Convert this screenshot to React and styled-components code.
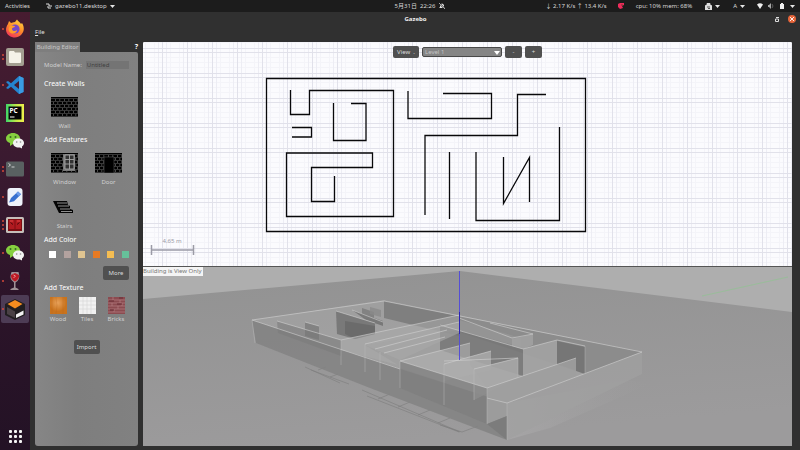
import React from "react";
import styled, { createGlobalStyle } from "styled-components";

const GlobalStyle = createGlobalStyle`
  * { box-sizing: border-box; }
  body {
    margin: 0;
    background: #303030;
    color: #d8d8d8;
    font: 6px/10px "Noto Sans", "Noto Sans CJK SC", sans-serif;
  }
  button, input, select { font: inherit; color: inherit; margin: 0; padding: 0; border: 0; }
  svg { display: block; }
`;

const Desktop = styled.div`
  height: 100vh;
  display: grid;
  grid-template-rows: 12px minmax(0, 1fr);
`;

const TopBar = styled.header`
  display: grid;
  grid-template-columns: 1fr auto 1fr;
  align-items: center;
  padding: 0 5px;
  background: #1c1c1c;
`;

const BarGroup = styled.div`
  display: flex;
  align-items: center;
  justify-content: ${(p) => (p.$end ? "flex-end" : "flex-start")};
  gap: ${(p) => p.$gap}px;
  white-space: nowrap;
`;

const Clock = styled(BarGroup)`
  padding-left: 40px;
`;

const BarButton = styled.button`
  display: flex;
  align-items: center;
  gap: 3px;
  background: none;
`;

const Workspace = styled.div`
  display: grid;
  grid-template-columns: 30px minmax(0, 1fr);
  min-height: 0;
`;

const Dock = styled.nav`
  display: flex;
  flex-direction: column;
  justify-content: space-between;
  padding: 3px 0 0;
  background: linear-gradient(#471c30 0, #3a1a30 35%, #2c1429 65%, #231225);
`;

const DockList = styled.div`
  display: flex;
  flex-direction: column;
`;

const DockButton = styled.button`
  position: relative;
  width: 28px;
  height: 28px;
  margin-left: 1px;
  display: grid;
  place-items: center;
  border-radius: 2px;
  background: ${(p) => (p.$active ? "#4d3c55" : "none")};
`;

const Dots = styled.span`
  position: absolute;
  left: 1px;
  top: 0;
  height: 100%;
  display: flex;
  flex-direction: column;
  justify-content: center;
  gap: 2px;
`;

const Dot = styled.i`
  width: 2px;
  height: 2px;
  border-radius: 1px;
  background: #d5483a;
`;

const AppWindow = styled.main`
  display: grid;
  grid-template-rows: 14px 16px minmax(0, 1fr);
  padding: 0 8px 4px 5px;
  background: #303030;
  min-width: 0;
`;

const TitleBar = styled.div`
  display: grid;
  grid-template-columns: 1fr auto 1fr;
  align-items: center;
  margin-right: -4px;
`;

const Title = styled.h1`
  margin: 0;
  font-size: 6px;
  line-height: 10px;
  color: #f0f0f0;
`;

const WindowButtons = styled.div`
  display: flex;
  justify-content: flex-end;
  align-items: center;
  gap: 7px;
`;

const WindowButton = styled.button`
  width: 8px;
  height: 8px;
  display: grid;
  place-items: center;
  border-radius: 4px;
  background: ${(p) => (p.$close ? "#e7653a" : "none")};
`;

const MenuBar = styled.div`
  display: flex;
  align-items: flex-start;
  padding-top: 1px;
`;

const MenuButton = styled.button`
  background: none;
  color: #e0e0e0;
`;

const Columns = styled.div`
  display: grid;
  grid-template-columns: 103px minmax(0, 1fr);
  gap: 5px;
  min-height: 0;
`;

const Sidebar = styled.aside`
  display: flex;
  flex-direction: column;
`;

const TabRow = styled.div`
  display: flex;
  justify-content: space-between;
  height: 10px;
`;

const Tab = styled.button`
  width: 45px;
  background: #7e7e7e;
  color: #c6c6c6;
`;

const HelpButton = styled.button`
  background: none;
  color: #fff;
  font-size: 7px;
  font-weight: 700;
`;

const Palette = styled.div`
  flex: 1;
  padding: 8px 9px;
  background: linear-gradient(90deg, #868686, #7e7e7e 40%, #818181);
  border-radius: 0 2px 3px 3px;
`;

const Field = styled.label`
  display: grid;
  grid-template-columns: auto minmax(0, 1fr);
  gap: 4px;
  height: 10px;
  color: #cfcfcf;
`;

const NameInput = styled.input`
  width: 100%;
  height: 8px;
  margin-top: 1px;
  padding-left: 1px;
  background: #747474;
  color: #404040;
`;

const Heading = styled.h2`
  margin: ${(p) => p.$top}px 0 0;
  font-size: 7px;
  line-height: 12px;
  font-weight: 400;
  color: #fff;
`;

const ToolGrid = styled.div`
  display: grid;
  grid-template-columns: 41px 41px;
  gap: 10px 3px;
  margin-top: 7px;
`;

const ToolButton = styled.button`
  display: grid;
  justify-items: center;
  gap: ${(p) => p.$gap}px;
  background: none;
  color: #d0d0d0;
`;

const Swatches = styled.div`
  display: flex;
  justify-content: space-between;
  margin: 5px 0 8px;
  padding: 0 0 0 5px;
`;

const Swatch = styled.button`
  width: 7px;
  height: 7px;
  background: ${(p) => p.$color};
`;

const ActionRow = styled.div`
  display: flex;
  justify-content: ${(p) => p.$align};
  margin-top: ${(p) => p.$top}px;
`;

const PushButton = styled.button`
  height: ${(p) => (p.$small ? 12 : 14)}px;
  width: ${(p) => p.$width}px;
  border-radius: 2px;
  background: #505050;
  color: #dcdcdc;
`;

const TextureRow = styled.div`
  display: grid;
  grid-template-columns: repeat(3, 28px);
  gap: 1px;
  margin-top: 3px;
`;

const Views = styled.section`
  display: grid;
  grid-template-rows: minmax(0, 56fr) minmax(0, 45fr);
  min-height: 0;
`;

const View = styled.div`
  position: relative;
  min-width: 0;
  overflow: hidden;
  background: ${(p) => p.$bg};
  border-top: ${(p) => (p.$divided ? "1px solid #555" : "0")};
  border-radius: ${(p) => (p.$divided ? "0" : "2px 2px 0 0")};
`;

const Scene = styled.svg`
  width: 100%;
  height: 100%;
`;

const ViewTools = styled.div`
  position: absolute;
  top: 4px;
  left: 0;
  right: 0;
  display: flex;
  justify-content: center;
  align-items: center;
  gap: 3px;
`;

const SelectWrap = styled.div`
  position: relative;
  width: 80px;
`;

const LevelSelect = styled.select`
  display: block;
  appearance: none;
  width: 100%;
  height: 10px;
  padding-left: 2px;
  border: 1px solid #484848;
  border-radius: 2px;
  line-height: 8px;
  background: #858585;
  color: #c4c4c4;
`;

const SelectArrow = styled.svg`
  position: absolute;
  right: 2px;
  top: 4px;
  pointer-events: none;
`;

const Notice = styled.div`
  position: absolute;
  top: 0;
  left: 0;
  padding-right: 1px;
  line-height: 9px;
  background: #f4f4f4;
  color: #777;
`;

const Caret = () => (
  <svg width="5" height="3" viewBox="0 0 5 3"><path d="M0 0h5L2.5 3z" fill="#e4e4e4" /></svg>
);

const Firefox = () => (
  <svg width="20" height="20" viewBox="0 0 20 20">
    <defs>
      <linearGradient id="fx" x1="0.8" y1="0" x2="0.3" y2="1">
        <stop offset="0" stopColor="#ffd83e" /><stop offset=".5" stopColor="#ff8a2a" /><stop offset="1" stopColor="#f2345a" />
      </linearGradient>
    </defs>
    <path d="M3 5l1-3 2 2c1 0 2-1 4-1l2-2.500c1 2 3 2.500 4 4.500l1-1c3 5 2 9-1 12-3 3-8 3.500-12 .5C.5 14 0 9 3 5z" fill="url(#fx)" />
    <circle cx="10" cy="10" r="4.600" fill="#7547c8" />
    <path d="M5 7c2-1 3 0 5 0 0 2-3 1-3 3s3 3 5 1c0 4-6 5-8 1-1-2 0-4 1-5z" fill="#ff9c2b" />
  </svg>
);

const Files = () => (
  <svg width="20" height="20" viewBox="0 0 20 20">
    <rect x="1" y="1" width="18" height="18" rx="2" fill="#a39e91" />
    <path d="M4 5q0-1 1-1h4l1 1.500h5q1 0 1 1V15q0 1-1 1H5q-1 0-1-1z" fill="#f5f2e9" />
  </svg>
);

const Code = () => (
  <svg width="20" height="20" viewBox="0 0 20 20">
    <path d="M14 1l4.500 2v14L14 19 6 11.800 3 14 1 13 4 10 1 7l2-1 3 2.200zM14 6l-5 4 5 4z" fill="#2484cf" fillRule="evenodd" />
    <path d="M14 1l4.500 2v14L14 19z" fill="#3a9be3" />
  </svg>
);

const PyCharm = () => (
  <svg width="20" height="20" viewBox="0 0 20 20">
    <defs>
      <linearGradient id="py"><stop stopColor="#3ed66a" /><stop offset=".6" stopColor="#c6e947" /><stop offset="1" stopColor="#f1ef4c" /></linearGradient>
    </defs>
    <rect x="1" y="1" width="18" height="18" fill="url(#py)" />
    <rect x="3.500" y="3.500" width="13" height="13" fill="#050505" />
    <text x="4.500" y="10" fontSize="6.500" fontWeight="700" fill="#fff">PC</text>
    <path d="M5 14h4.500" stroke="#fff" />
  </svg>
);

const WeChat = () => (
  <svg width="20" height="20" viewBox="0 0 20 20">
    <path d="M8 2c4 0 7 2.400 7 5.500S12 13 8 13l-3 2v-3C2.500 11 1 9.500 1 7.500 1 4.400 4 2 8 2z" fill="#86cf3f" />
    <circle cx="5.500" cy="6" r="1" fill="#376823" /><circle cx="10.500" cy="6" r="1" fill="#376823" />
    <path d="M13.500 7.500c3.200 0 5.500 2 5.500 4.500 0 1.500-.7 2.600-2 3.500v2l-2-1c-4 .5-7-1.500-7-4.500 0-2.500 2.400-4.500 5.500-4.500z" fill="#f2f2f2" />
    <circle cx="11.700" cy="11" r=".8" fill="#888" /><circle cx="15.500" cy="11" r=".8" fill="#888" />
  </svg>
);

const Terminal = () => (
  <svg width="20" height="20" viewBox="0 0 20 20">
    <rect x="1" y="2.500" width="18" height="15" rx="1.500" fill="#596061" />
    <path d="M3.500 4.500l2 1.500-2 1.500M6.500 8h3" stroke="#e8e8e8" strokeWidth=".8" fill="none" />
  </svg>
);

const Editor = () => (
  <svg width="20" height="20" viewBox="0 0 20 20">
    <rect x="2.500" y="1" width="15" height="18" rx="3" fill="#eef2fa" />
    <path d="M13 4.500l3 2.700-7 7-5 1.300 2-4.500z" fill="#3870cf" /><path d="M13 4.500l3 2.700-2 2-3-2.700z" fill="#6c9be8" />
  </svg>
);

const Terminator = () => (
  <svg width="20" height="20" viewBox="0 0 20 20">
    <rect x="1" y="2" width="18" height="16" rx="1.500" fill="#c5beb9" />
    <rect x="3" y="4" width="14" height="12" fill="#7c0d12" />
    <path d="M4 5h5.500v9H4zM10.500 5H16v9h-5.500z" fill="#b01a20" />
    <path d="M5.500 7.500l2.500 2M14.500 7.500l-2.500 2" stroke="#4a0709" />
    <path d="M5 6h3M12 6h3" stroke="#ec5350" strokeWidth=".8" />
  </svg>
);

const Wine = () => (
  <svg width="20" height="20" viewBox="0 0 20 20">
    <path d="M6.500 1h7q2 6-1 9l-2 1.500v5l3 1.500v1h-8v-1l3.500-1.500v-5L6.500 9q-2-3 0-8z" fill="#9f9297" />
    <path d="M6 4l4-2 4 2q.5 4-4 6.500Q5.500 8 6 4z" fill="#bd1a24" />
    <path d="M8.500 4l2 1-2 2" stroke="#f18b8b" fill="none" />
  </svg>
);

const GazeboIcon = () => (
  <svg width="22" height="22" viewBox="0 0 22 22">
    <path d="M11 1l10 5v11l-10 5-10-5V6z" fill="#211e20" />
    <path d="M11 2l7.500 4L11 10.500 3.500 6z" fill="#f58c1f" />
    <path d="M3 9l8 4.500V20l-8-4z" fill="#4a4145" />
    <path d="M12 16.500l7.500-4v4L12 20z" fill="#f3f3f3" />
  </svg>
);

const AppsGrid = () => (
  <svg width="14" height="14" viewBox="0 0 14 14">
    {[0, 5, 10].map((y) => [0, 5, 10].map((x) => <rect key={`${x}-${y}`} x={x + 1} y={y + 1} width="3" height="3" rx="1" fill="#f3f3f3" />))}
  </svg>
);

const dockApps = [
  ["Firefox", Firefox, 1], ["Files", Files, 2], ["Visual Studio Code", Code, 1], ["PyCharm", PyCharm, 0],
  ["WeChat", WeChat, 0], ["Terminal", Terminal, 2], ["Text editor", Editor, 1], ["Terminator", Terminator, 3],
  ["WeChat messages", WeChat, 1], ["Wine", Wine, 1], ["Gazebo", GazeboIcon, 1],
];

const brickRows = [0, 1, 2, 3, 4, 5, 6];

const BrickArt = ({ kind }) => (
  <svg width="27" height="20" viewBox="0 0 27 20">
    <rect width="27" height="20" fill="#000" />
    {brickRows.map((r) => (
      <g key={r}>
        <path d={`M0 ${r * 3 + 1.5}h27`} stroke="#444" strokeWidth=".8" />
        <path d={`M${r % 2 ? 2 : 4} ${r * 3 + 3}H27`} stroke="#6a6a6a" strokeWidth="2" strokeDasharray=".7 3.800" />
      </g>
    ))}
    {kind === "window" && (
      <g>
        <rect x="12" y="1" width="12" height="17" fill="#777" />
        <path d="M14 2h9v14h-9zM18.500 2v14M14 6.500h9M14 11h9" fill="#333" stroke="#a5a5a5" strokeWidth=".9" />
      </g>
    )}
    {kind === "door" && <path d="M9 4h10v16H9z" fill="#000" stroke="#666" strokeWidth=".5" />}
  </svg>
);

const StairsArt = () => (
  <svg width="27" height="20" viewBox="0 0 27 20">
    <path d="M2 4h14l1 4 2 1v3l3 1v3H8z" fill="#050505" />
    <path d="M6 6h10M7 9h11M9 12h10M10 14.500h11" stroke="#8e8e8e" strokeWidth="1" />
  </svg>
);

const TextureArt = ({ kind }) => (
  <svg width="17" height="17" viewBox="0 0 17 17">
    <defs>
      <radialGradient id="wood" cx=".45" cy=".35"><stop stopColor="#e8a25b" /><stop offset="1" stopColor="#c9731d" /></radialGradient>
    </defs>
    <rect width="17" height="17" fill={{ wood: "url(#wood)", tiles: "#f1f1f1", bricks: "#8b4b50" }[kind]} />
    {kind === "wood" && <path d="M2 0v17M6 0q2 8 0 17M13 0v17" stroke="#b86316" opacity=".25" fill="none" />}
    {kind === "tiles" && <path d="M0 4h17M0 8h17M0 12h17M4 0v17M8 0v17M12 0v17" stroke="#d7d7d7" strokeWidth=".7" />}
    {kind === "bricks" && (
      <g>
        <path d="M0 3h17M0 6h17M0 9h17M0 12h17M0 15h17M5 0v3M12 3v3M4 6v3M10 9v3M6 12v3M14 6v3" stroke="#b58082" strokeWidth=".7" />
        <path d="M1 4h5M9 7h5M2 13h4M11 1h4" stroke="#672b32" />
      </g>
    )}
  </svg>
);

const plan = [
  "M266.500 78.500H585.500V231.500H266.500Z",
  "M290.500 90V114.500H309.500V90.500H393.500V216.500H286.500V153H372.500V167.500H311.500V201.500H334.500V176",
  "M292 127.500H311.500V137H292",
  "M333.500 103V140.500H366V103.500H351",
  "M408 91V118.500H491.500V93.500H443",
  "M425 215V135.500H517.500V94.500H546",
  "M449.500 152V219",
  "M476 152V220.500H559.500V127",
  "M503.500 157V203.500L529.500 157.500V202",
];

const FloorPlan = () => (
  <Scene viewBox="143 42 649 224" preserveAspectRatio="xMidYMid slice" role="img" aria-label="Floor plan">
    <defs>
      <pattern id="grid" width="25" height="25" patternUnits="userSpaceOnUse">
        <path d="M4.500 0v25M20.500 0v25M0 7.500h25M0 12.500h25M0 17.500h25" stroke="#f4f4f9" />
        <path d="M8.500 0v25M16.500 0v25" stroke="#ededf4" />
        <path d="M0 2.500h25M0 23.500h25M12.500 0v25" stroke="#e1e1ea" />
      </pattern>
    </defs>
    <rect x="143" y="42" width="649" height="224" fill="#fbfbfe" />
    <rect x="143" y="42" width="649" height="224" fill="url(#grid)" />
    {plan.map((d) => <path key={d} d={d} fill="none" stroke="#08080a" strokeWidth="1.300" />)}
    <path d="M151.500 245v10M193.500 245v10M151 250h42" stroke="#9b9ba6" strokeWidth="1.500" />
    <text x="172" y="243" textAnchor="middle" fontSize="6" fill="#9a9aa6">4.65 m</text>
  </Scene>
);

const faces = [
  ["252,320 384,300 642,352 507,403", "#a3a3a3", 0.75],
  ["384,301 459,316 459,336 384,318", "#777", 0.8],
  ["459,316 642,352 585,374 459,332", "#858585", 0.75],
  ["252,320 400,369 507,403 507,440 370,388 256,343", "#838383", 0.85],
  ["336,311 375,323 375,334 355,339 337,334", "#747474", 0.9],
  ["345,321 375,326 375,334 355,339 345,334", "#656565", 0.7],
  ["352,310 383,321 383,326 366,320", "#6e6e6e", 0.8],
  ["362,308 374,312 374,320 362,317", "#7b7b7b", 0.8],
  ["370,307 381,310 381,317 370,314", "#898989", 0.8],
  ["277,321 341,340 341,356 278,333", "#7b7b7b", 0.6],
  ["305,322 319,326 319,340 305,336", "#767676", 0.7],
  ["341,340 459,315 459,330 365,345 398,365 341,350", "#acacac", 0.55],
  ["440,325 523,349 523,376 440,350", "#747474", 0.8],
  ["440,325 459,320 521,338 521,347", "#969696", 0.8],
  ["512,339 533,334 533,345 523,349 512,346", "#a1a1a1", 0.9],
  ["523,349 557,340 557,364 523,376", "#a2a2a2", 0.9],
  ["557,341 585,347 585,374 557,364", "#727272", 0.85],
  ["365,345 459,322 459,333 400,360", "#a9a9a9", 0.6],
  ["400,361 470,343 470,365 487,388", "#b0b0b0", 0.6],
  ["444,364 491,351 491,370 444,381", "#acacac", 0.8],
  ["474,369 518,358 518,378 474,400", "#a9a9a9", 0.85],
  ["400,361 487,388 487,424 400,388", "#7c7c7c", 0.65],
  ["487,388 576,358 576,377 507,403 507,416 487,424", "#9f9f9f", 0.9],
  ["507,403 642,352 642,374 507,440", "#a0a0a0", 0.75],
  ["487,424 507,416 507,440", "#777", 0.7],
];

const edges = [
  "M252 320L400 369M487 398L507 403L642 352L384 301L252 320",
  "M277 321L341 340L459 315M305 322L319 326M336 311L375 323M352 310L383 322",
  "M365 344L459 322M375 349L447 330M384 353L445 337M440 325L523 349L557 340L585 346",
  "M459 318L512 338L533 334L490 323M400 361L487 388L576 358M400 361L470 343M444 364L491 351M444 361L518 358L474 369",
];

const Model3D = () => (
  <Scene viewBox="143 267 649 179" preserveAspectRatio="xMidYMid slice" role="img" aria-label="3D building model">
    <defs>
      <linearGradient id="ground" x1="0" y1="0" x2=".3" y2="1"><stop stopColor="#929292" /><stop offset="1" stopColor="#9c9b9c" /></linearGradient>
      <linearGradient id="shine"><stop stopColor="#b0afb0" stopOpacity=".5" /><stop offset="1" stopColor="#a3a3a3" stopOpacity="0" /></linearGradient>
    </defs>
    <rect x="143" y="267" width="649" height="179" fill="#aeaeae" />
    <path d="M143 299L460 271L792 312V446H143z" fill="url(#ground)" />
    <path d="M507 403L628 380L650 384L550 428L507 440z" fill="url(#shine)" />
    <path d="M702 296L788 277" stroke="#8fc590" strokeWidth="1" opacity=".65" />
    <path d="M305 367l35 16M311 370l38 14M362 390l98 42M367 396l92 36M440 425l22 7 16-6M318 370l8-3M330 377l8-3M378 399l12-5M398 407l12-5M418 415l12-5M438 423l12-5" stroke="#7c7c7c" strokeWidth=".6" fill="none" />
    {faces.map(([points, fill, opacity]) => <polygon key={points} points={points} fill={fill} opacity={opacity} />)}
    {edges.map((d) => <path key={d} d={d} fill="none" stroke="#d2d2d2" strokeWidth=".8" opacity=".75" />)}
    <path d="M252 320L255 343M341 340V365M365 344V372M380 352V380M400 361V388M444 364V405M474 369V400M487 388V424M507 403V440M585 346V373M518 358V377" stroke="#c1c1c1" strokeWidth=".6" opacity=".7" />
    <rect x="459" y="271" width="1" height="89" fill="#554fd6" />
    <rect x="459" y="312" width="1" height="22" fill="#2a22b4" />
  </Scene>
);

const Tool = ({ label, gap = 4, children }) => (
  <ToolButton $gap={gap} type="button">{children}<span>{label}</span></ToolButton>
);

const BuildingPalette = () => (
  <Sidebar>
    <TabRow><Tab type="button">Building Editor</Tab><HelpButton type="button">?</HelpButton></TabRow>
    <Palette>
      <Field htmlFor="model-name">Model Name:<NameInput id="model-name" defaultValue="Untitled" /></Field>
      <Heading $top={8}>Create Walls</Heading>
      <ToolGrid><Tool label="Wall"><BrickArt kind="wall" /></Tool></ToolGrid>
      <Heading $top={3}>Add Features</Heading>
      <ToolGrid>
        <Tool label="Window"><BrickArt kind="window" /></Tool>
        <Tool label="Door"><BrickArt kind="door" /></Tool>
        <Tool label="Stairs"><StairsArt /></Tool>
      </ToolGrid>
      <Heading $top={3}>Add Color</Heading>
      <Swatches>
        {["#fff", "#b3a29f", "#dfc491", "#e67a24", "#f5bd52", "#66c09a"].map((c) => (
          <Swatch key={c} $color={c} type="button" aria-label={`Color ${c}`} />
        ))}
      </Swatches>
      <ActionRow $align="flex-end" $top={0}><PushButton $width={26} type="button">More</PushButton></ActionRow>
      <Heading $top={2}>Add Texture</Heading>
      <TextureRow>
        <Tool gap={0} label="Wood"><TextureArt kind="wood" /></Tool>
        <Tool gap={0} label="Tiles"><TextureArt kind="tiles" /></Tool>
        <Tool gap={0} label="Bricks"><TextureArt kind="bricks" /></Tool>
      </TextureRow>
      <ActionRow $align="center" $top={16}><PushButton $width={26} type="button">Import</PushButton></ActionRow>
    </Palette>
  </Sidebar>
);

const SystemBar = () => (
  <TopBar>
    <BarGroup $gap={16}>
      <BarButton type="button">Activities</BarButton>
      <BarButton type="button">
        <svg width="6" height="6" viewBox="0 0 6 6"><path d="M0 1h3v2h3M2 3v2h3" stroke="#ddd" fill="none" /></svg>
        gazebo11.desktop<Caret />
      </BarButton>
    </BarGroup>
    <Clock $gap={4}>
      <span>5月31日&nbsp; 22:26</span>
      <svg width="6" height="6" viewBox="0 0 6 6"><path d="M0 5l1-1V2q2-3 4 0v2l1 1z" fill="#e4e4e4" /><path d="M0 0l6 6" stroke="#1c1c1c" strokeWidth="1.500" /><path d="M0 0l6 6" stroke="#e4e4e4" strokeWidth=".7" /></svg>
    </Clock>
    <BarGroup $end $gap={12}>
      <BarGroup $gap={11}>
        <span>↓ 2.17 K/s ↑ 13.4 K/s</span>
        <svg width="6" height="6" viewBox="0 0 6 6"><path d="M2 0h4v2L4 3l1 2-3 1-2-2V1z" fill="#ee2b5b" /><path d="M3 2h2" stroke="#341" strokeWidth=".6" /></svg>
      </BarGroup>
      <BarGroup $gap={13}>
        <span>cpu: 10% mem: 68%</span>
        <BarButton type="button" aria-label="Clipboard">
          <svg width="7" height="7" viewBox="0 0 7 7"><path d="M.5 2.500h6V7H.5zM2 2V.5h3V2" fill="#ddd" stroke="#ddd" /><path d="M2 4h3M3 5.500h2" stroke="#333" strokeWidth=".8" /></svg><Caret />
        </BarButton>
        <BarButton type="button">A<Caret /></BarButton>
      </BarGroup>
      <BarGroup $gap={5}>
        <svg width="6" height="6" viewBox="0 0 6 6"><path d="M0 1.500q3-2.500 6 0L3 6z" fill="#eee" /></svg>
        <svg width="6" height="6" viewBox="0 0 6 6"><path d="M0 2h1l2-2v6L1 4H0z" fill="#aaa" /><path d="M4 1q2 2 0 4" stroke="#777" fill="none" strokeWidth=".7" /></svg>
        <svg width="6" height="6" viewBox="0 0 6 6"><path d="M2 0h2v1h1v5H1V1h1z" fill="#eee" /></svg>
        <Caret />
      </BarGroup>
    </BarGroup>
  </TopBar>
);

export default function App() {
  return (
    <Desktop>
      <GlobalStyle />
      <SystemBar />
      <Workspace>
        <Dock aria-label="Applications">
          <DockList>
            {dockApps.map(([name, Icon, dots]) => (
              <DockButton key={name} type="button" aria-label={name} $active={name === "Gazebo"}>
                <Dots>{Array.from({ length: dots }, (_, i) => <Dot key={i} />)}</Dots>
                <Icon />
              </DockButton>
            ))}
          </DockList>
          <DockButton type="button" aria-label="Show applications"><AppsGrid /></DockButton>
        </Dock>
        <AppWindow>
          <TitleBar>
            <span />
            <Title>Gazebo</Title>
            <WindowButtons>
              <WindowButton type="button" aria-label="Restore">
                <svg width="4" height="5" viewBox="0 0 4 5"><path d="M1 .5h3M.5 2h3v2.500h-3z" fill="none" stroke="#ddd" /></svg>
              </WindowButton>
              <WindowButton $close type="button" aria-label="Close">
                <svg width="4" height="4" viewBox="0 0 4 4"><path d="M0 0l4 4M4 0L0 4" stroke="#fff" strokeWidth=".9" /></svg>
              </WindowButton>
            </WindowButtons>
          </TitleBar>
          <MenuBar><MenuButton type="button"><u>F</u>ile</MenuButton></MenuBar>
          <Columns>
            <BuildingPalette />
            <Views>
              <View $bg="#fbfbfe">
                <FloorPlan />
                <ViewTools>
                  <PushButton $small $width={26} type="button">View &nbsp;.</PushButton>
                  <SelectWrap>
                    <LevelSelect aria-label="Level"><option>Level 1</option></LevelSelect>
                    <SelectArrow width="6" height="4" viewBox="0 0 6 4"><path d="M0 0h6L3 4z" fill="#fff" /></SelectArrow>
                  </SelectWrap>
                  <PushButton $small $width={17} type="button">-</PushButton>
                  <PushButton $small $width={17} type="button">+</PushButton>
                </ViewTools>
              </View>
              <View $divided $bg="#999">
                <Model3D />
                <Notice>Building is View Only</Notice>
              </View>
            </Views>
          </Columns>
        </AppWindow>
      </Workspace>
    </Desktop>
  );
}
